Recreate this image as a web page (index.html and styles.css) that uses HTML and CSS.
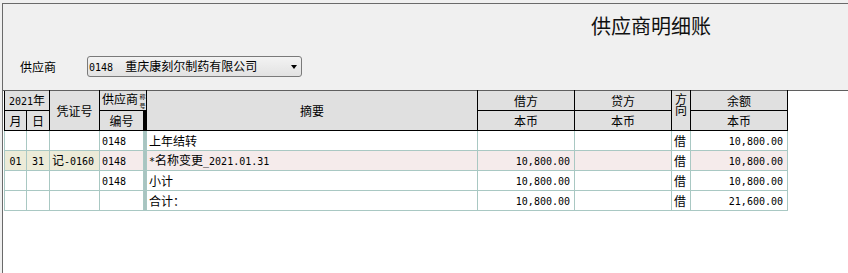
FILE: index.html
```html
<!DOCTYPE html>
<html lang="zh-CN">
<head>
<meta charset="utf-8">
<title>供应商明细账</title>
<link rel="stylesheet" href="styles.css">
</head>
<body>
<div class="frame">
  <div class="top">
    <h1 class="title">供应商明细账</h1>
    <div class="filter">
      <span class="label">供应商</span>
      <div class="combo">
        <span class="combo-text"><span class="n">0148  </span>重庆康刻尔制药有限公司</span>
        <span class="arrow"></span>
      </div>
    </div>
  </div>
  <div class="grid-area">
    <table class="ledger">
      <colgroup>
        <col class="w-m"><col class="w-d"><col class="w-v"><col class="w-s"><col class="w-bar">
        <col class="w-z"><col class="w-amt"><col class="w-amt"><col class="w-dir"><col class="w-amt">
      </colgroup>
      <thead>
        <tr>
          <th colspan="2"><span class="n">2021</span>年</th>
          <th rowspan="2">凭证号</th>
          <th colspan="2" class="sup"><span class="sup-text">供应商</span><span class="squeeze">称<br>号</span></th>
          <th rowspan="2">摘要</th>
          <th>借方</th>
          <th>贷方</th>
          <th rowspan="2" class="dir">方向</th>
          <th>余额</th>
        </tr>
        <tr>
          <th>月</th>
          <th>日</th>
          <th>编号</th>
          <th class="bar-h"></th>
          <th>本币</th>
          <th>本币</th>
          <th>本币</th>
        </tr>
      </thead>
      <tbody>
        <tr>
          <td></td><td></td><td></td>
          <td class="l"><span class="n">0148</span></td>
          <td class="bar"></td>
          <td class="l">上年结转</td>
          <td></td><td></td>
          <td class="l">借</td>
          <td class="r"><span class="n">10,800.00</span></td>
        </tr>
        <tr class="hl">
          <td class="c bg-y"><span class="n">01</span></td>
          <td class="c bg-y"><span class="n">31</span></td>
          <td class="l bg-y">记<span class="n">-0160</span></td>
          <td class="l bg-p"><span class="n">0148</span></td>
          <td class="bar"></td>
          <td class="l bg-p"><span class="n">*</span>名称变更<span class="n">_2021.01.31</span></td>
          <td class="r bg-p"><span class="n">10,800.00</span></td>
          <td class="bg-p"></td>
          <td class="l">借</td>
          <td class="r bg-p"><span class="n">10,800.00</span></td>
        </tr>
        <tr>
          <td></td><td></td><td></td>
          <td class="l"><span class="n">0148</span></td>
          <td class="bar"></td>
          <td class="l">小计</td>
          <td class="r"><span class="n">10,800.00</span></td>
          <td></td>
          <td class="l">借</td>
          <td class="r"><span class="n">10,800.00</span></td>
        </tr>
        <tr>
          <td></td><td></td><td></td>
          <td></td>
          <td class="bar"></td>
          <td class="l">合计：</td>
          <td class="r"><span class="n">10,800.00</span></td>
          <td></td>
          <td class="l">借</td>
          <td class="r"><span class="n">21,600.00</span></td>
        </tr>
      </tbody>
    </table>
  </div>
</div>
</body>
</html>
```
FILE: styles.css
```css
html, body {
  margin: 0;
  height: 100%;
  background: #f0f0f0;
  font-family: "Noto Sans CJK SC", "Noto Sans", sans-serif;
  font-size: 12px;
  color: #000;
}

.n {
  font-family: "DejaVu Sans Mono", "Liberation Mono", monospace;
  font-size: 10px;
  white-space: pre;
}

.frame {
  box-sizing: border-box;
  margin: 3px 0 0 2px;
  height: calc(100% - 3px);
  border-left: 1px solid #6a6a6a;
  border-top: 1px solid #6a6a6a;
  display: flex;
  flex-direction: column;
}

.top {
  display: flex;
  flex-direction: column;
}

.title {
  margin: 12px 0 0 588px;
  font-size: 20px;
  line-height: 20px;
  font-weight: normal;
  color: #111;
}

.filter {
  display: flex;
  align-items: center;
  gap: 31px;
  margin: 20px 0 13px 17px;
}

.label {
  line-height: 16px;
}

.combo {
  box-sizing: border-box;
  width: 215px;
  height: 21px;
  border: 1px solid #7a7a7a;
  border-radius: 3px;
  background: linear-gradient(#f3f3f3, #e2e2e2);
  display: flex;
  align-items: center;
  justify-content: space-between;
  padding: 0 4px 0 1px;
}

.combo-text {
  line-height: 16px;
}

.arrow {
  width: 0;
  height: 0;
  border-left: 3px solid transparent;
  border-right: 3px solid transparent;
  border-top: 4px solid #000;
  margin-top: 1px;
}

.grid-area {
  flex: 1;
  background: #fff;
  border-top: 1px solid #5f5f5f;
}

.ledger {
  border-collapse: collapse;
  table-layout: fixed;
  width: 784px;
  margin-left: 1px;
  margin-top: -1px;
}

.w-m { width: 22px; }
.w-d { width: 23px; }
.w-v { width: 50px; }
.w-s { width: 44px; }
.w-bar { width: 3px; }
.w-z { width: 331px; }
.w-amt { width: 97px; }
.w-dir { width: 19px; }

.ledger th {
  background: #e0e0e0;
  border: 1px solid #000;
  font-weight: normal;
  height: 19px;
  padding: 0;
  line-height: 14px;
  text-align: center;
  vertical-align: middle;
  overflow: hidden;
  white-space: nowrap;
}

.ledger thead tr:first-child th {
  border-top-color: #5f5f5f;
}

.ledger th.sup {
  overflow: visible;
  text-align: left;
  padding-left: 2px;
}

.sup-text {
  display: inline-block;
  width: 36px;
}

.squeeze {
  display: inline-block;
  vertical-align: top;
  font-size: 6px;
  line-height: 9px;
  width: 7px;
  margin-left: 1px;
  text-align: center;
}

.ledger th.dir {
  white-space: normal;
  vertical-align: top;
  line-height: 11px;
  padding-top: 2px;
}

.ledger th.bar-h {
  background: #000;
}

.ledger td {
  border: 1px solid #a9c8c3;
  height: 19px;
  padding: 0;
  line-height: 14px;
  vertical-align: middle;
  white-space: nowrap;
  overflow: hidden;
}

.ledger td.l { padding-left: 2px; }
.ledger td.r { text-align: right; padding-right: 4px; }
.ledger td.c { text-align: center; }
.ledger td.bar { background: #a9c4c1; }

.bg-y { background: #ecebd8; }
.bg-p { background: #f5ebeb; }
```
